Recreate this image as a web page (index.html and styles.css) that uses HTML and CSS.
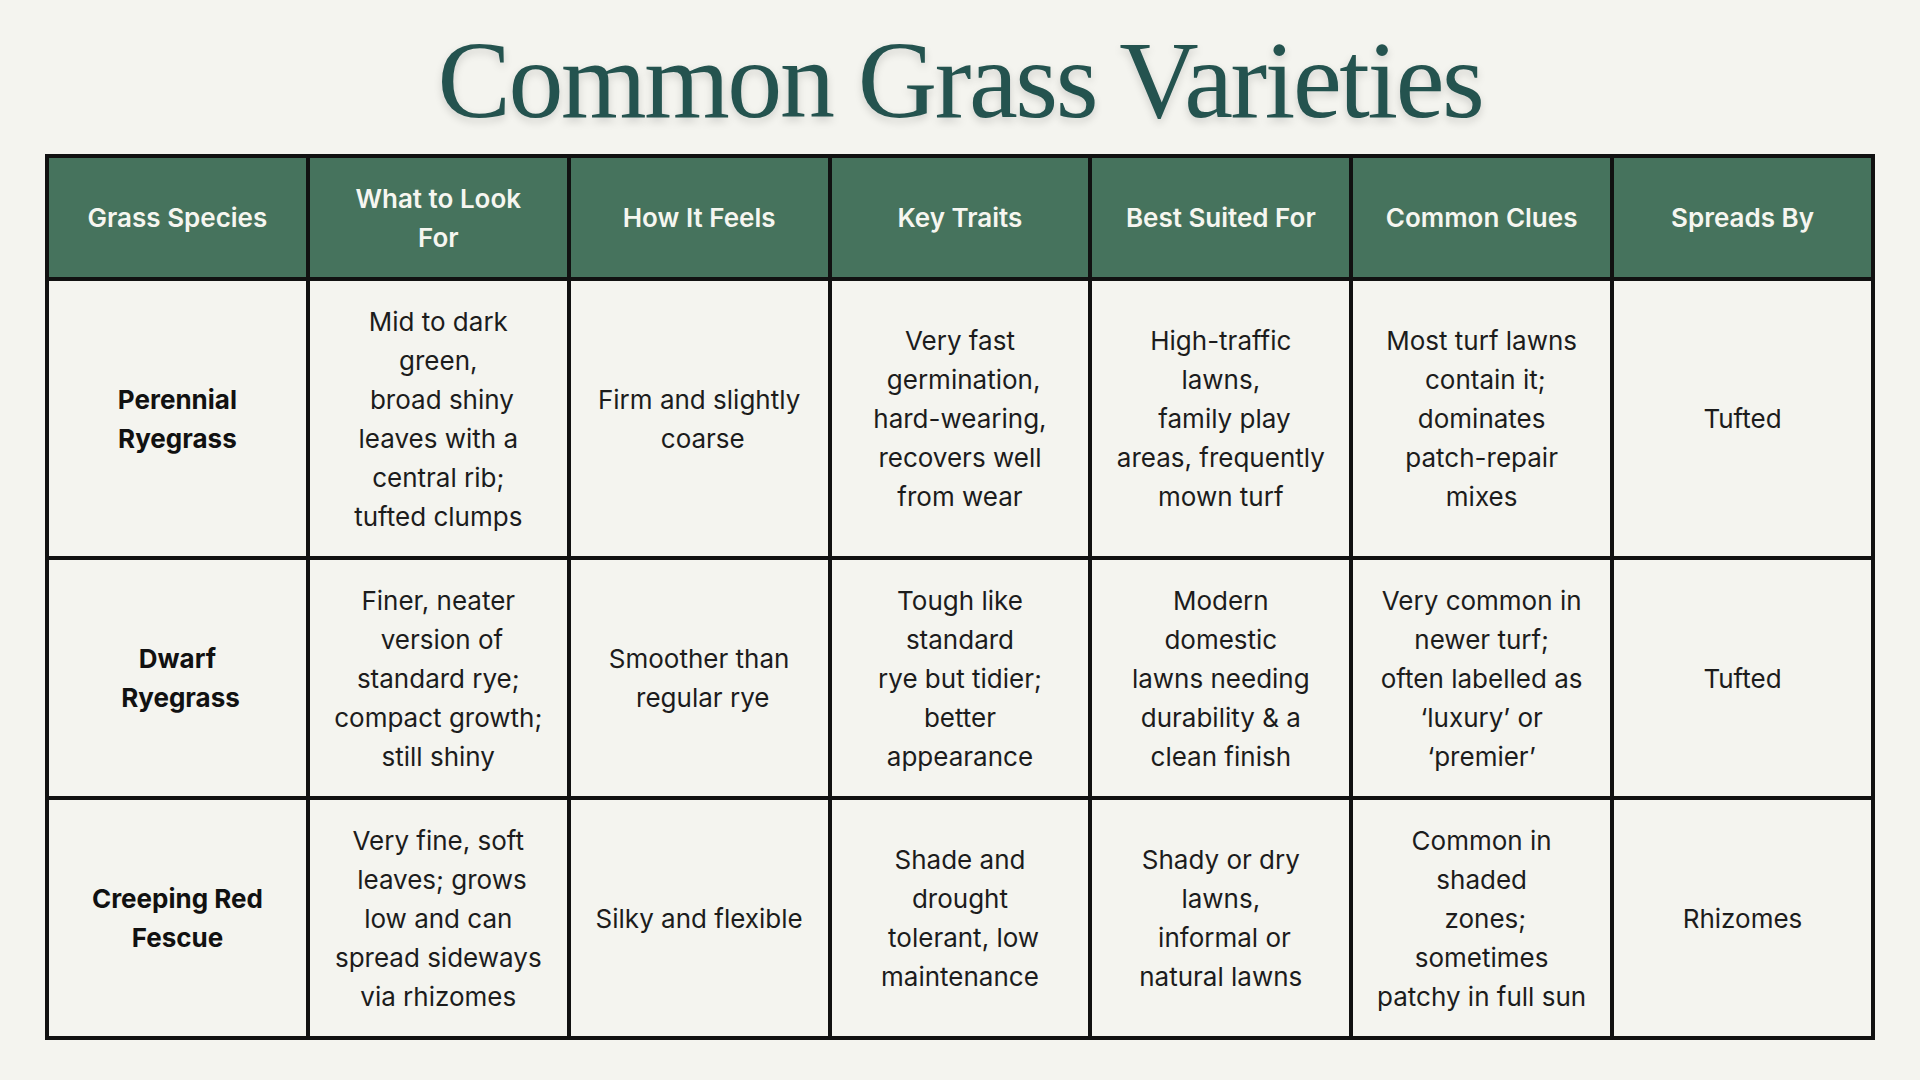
FILE: index.html
```html
<!DOCTYPE html>
<html lang="en">
<head>
<meta charset="utf-8">
<title>Common Grass Varieties</title>
<link rel="stylesheet" href="styles.css">
</head>
<body>
<main class="page">
  <h1 class="title">Common Grass Varieties</h1>
  <table class="grid">
    <colgroup>
      <col class="c"><col class="c"><col class="c"><col class="c"><col class="c"><col class="c"><col class="c">
    </colgroup>
    <thead>
      <tr class="head">
        <th>Grass Species</th>
        <th>What to Look<br>For</th>
        <th>How It Feels</th>
        <th>Key Traits</th>
        <th>Best Suited For</th>
        <th>Common Clues</th>
        <th>Spreads By</th>
      </tr>
    </thead>
    <tbody>
      <tr class="r1">
        <td class="name">Perennial<br>Ryegrass</td>
        <td>Mid to dark<br>green,<br>&nbsp;broad shiny<br>leaves with a<br>central rib;<br>tufted clumps</td>
        <td>Firm and slightly<br>&nbsp;coarse</td>
        <td>Very fast<br>&nbsp;germination,<br>hard-wearing,<br>recovers well<br>from wear</td>
        <td>High-traffic<br>lawns,<br>&nbsp;family play<br>areas, frequently<br>mown turf</td>
        <td>Most turf lawns<br>&nbsp;contain it;<br>dominates<br>patch-repair<br>mixes</td>
        <td>Tufted</td>
      </tr>
      <tr class="r2">
        <td class="name">Dwarf<br>&nbsp;Ryegrass</td>
        <td>Finer, neater<br>&nbsp;version of<br>standard rye;<br>compact growth;<br>still shiny</td>
        <td>Smoother than<br>&nbsp;regular rye</td>
        <td>Tough like<br>standard<br>rye but tidier;<br>better<br>appearance</td>
        <td>Modern<br>domestic<br>lawns needing<br>durability &amp; a<br>clean finish</td>
        <td>Very common in<br>newer turf;<br>often labelled as<br>‘luxury’ or<br>‘premier’</td>
        <td>Tufted</td>
      </tr>
      <tr class="r3">
        <td class="name">Creeping Red<br>Fescue</td>
        <td>Very fine, soft<br>&nbsp;leaves; grows<br>low and can<br>spread sideways<br>via rhizomes</td>
        <td>Silky and flexible</td>
        <td>Shade and<br>drought<br>&nbsp;tolerant, low<br>maintenance</td>
        <td>Shady or dry<br>lawns,<br>&nbsp;informal or<br>natural lawns</td>
        <td>Common in<br>shaded<br>&nbsp;zones;<br>sometimes<br>patchy in full sun</td>
        <td>Rhizomes</td>
      </tr>
    </tbody>
  </table>
</main>
</body>
</html>
```

FILE: styles.css
```css
html, body {
  margin: 0;
  padding: 0;
  background: #f4f4ef;
}

.page {
  width: 1920px;
  height: 1080px;
  box-sizing: border-box;
  padding: 20px 45px 0 45px;
  display: flex;
  flex-direction: column;
  align-items: center;
}

.title {
  margin: 0 0 14px 0;
  font-family: "Liberation Serif", "Times New Roman", serif;
  font-weight: 400;
  font-size: 110px;
  line-height: 120px;
  letter-spacing: -2.4px;
  color: #24534f;
  text-shadow: 0 4px 8px rgba(0, 0, 0, 0.15);
}

.grid {
  width: 1830px;
  border-collapse: collapse;
  table-layout: fixed;
  font-family: "Inter", "Noto Sans", sans-serif;
  font-size: 26px;
  line-height: 39px;
  color: #1c1c1c;
}

.grid th,
.grid td {
  border: 4px solid #111111;
  text-align: center;
  vertical-align: middle;
  padding: 0 6px;
}

.head th {
  background: #46735d;
  color: #f6f6f0;
  font-weight: 600;
  height: 119px;
}

.r1 td { height: 275px; }
.r2 td { height: 236px; }
.r3 td { height: 236px; }

.grid td.name {
  font-weight: 700;
  color: #111111;
}
```
